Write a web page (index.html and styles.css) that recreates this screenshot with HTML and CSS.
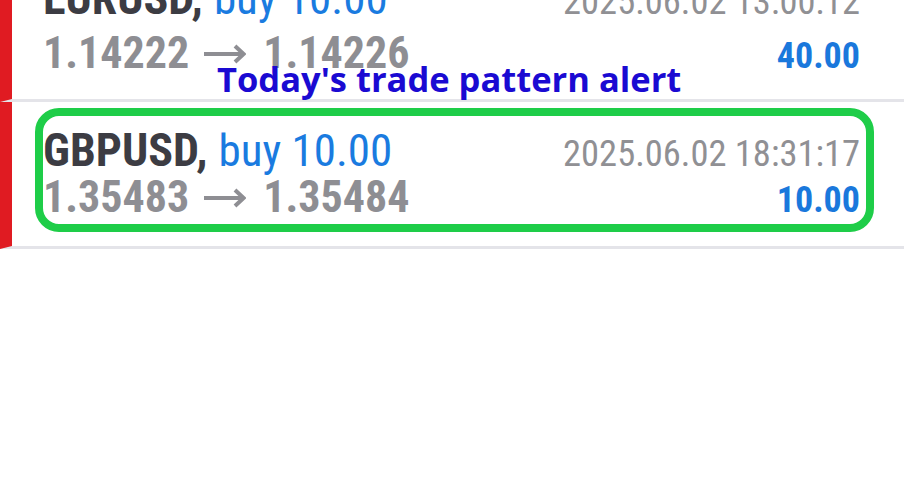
FILE: index.html
```html
<!DOCTYPE html>
<html lang="en">
<head>
    <meta charset="UTF-8">
    <meta name="viewport" content="width=device-width, initial-scale=1.0">
    <title>Trade history</title>
    <link rel="stylesheet" href="styles.css">
</head>
<body>
    <div class="deals">
        <div class="deal deal-top">
            <div class="deal-line">
                <span class="symbol">EURUSD,</span>
                <span class="side">buy 10.00</span>
                <span class="time">2025.06.02 13:00:12</span>
            </div>
            <div class="deal-line">
                <span class="prices">1.14222<svg class="arrow" width="42" height="24" viewBox="0 0 42 24"><path d="M0 12H39M31 4L39.5 12L31 20" fill="none" stroke="currentColor" stroke-width="4"/></svg>1.14226</span>
                <span class="profit">40.00</span>
            </div>
        </div>
        <div class="deal">
            <div class="deal-line">
                <span class="symbol">GBPUSD,</span>
                <span class="side">buy 10.00</span>
                <span class="time">2025.06.02 18:31:17</span>
            </div>
            <div class="deal-line">
                <span class="prices">1.35483<svg class="arrow" width="42" height="24" viewBox="0 0 42 24"><path d="M0 12H39M31 4L39.5 12L31 20" fill="none" stroke="currentColor" stroke-width="4"/></svg>1.35484</span>
                <span class="profit">10.00</span>
            </div>
            <div class="highlight"></div>
            <div class="note">Today's trade pattern alert</div>
        </div>
    </div>
</body>
</html>
```

FILE: styles.css
```css
body {
    margin: 0;
    background: #fff;
    font-family: 'Roboto Condensed', 'Roboto', sans-serif;
    font-stretch: condensed;
}

.deals {
    margin-top: -45px;
}

.deal {
    position: relative;
    height: 144px;
    box-sizing: content-box;
    border-left: 12px solid #e01b22;
    border-bottom: 3px solid #e4e4e9;
    padding: 0 44px 0 31px;
    display: flex;
    flex-direction: column;
    justify-content: center;
}

.deal-line {
    display: flex;
    align-items: baseline;
    height: 48px;
    position: relative;
    top: -3px;
}

/* first row is scrolled half out of view */
.deal-top .deal-line:first-child {
    top: -8px;
}

.deal-top .deal-line:last-child {
    top: 0;
}

.symbol {
    font-size: 46px;
    font-weight: bold;
    color: #3c3c43;
}

.side {
    font-size: 45px;
    color: #1a7be0;
    margin-left: 11px;
}

.time {
    margin-left: auto;
    font-size: 36.5px;
    color: #909094;
}

.prices {
    font-size: 44px;
    font-weight: bold;
    color: #8e8e93;
}

.arrow {
    margin: 0 17px 0 15px;
    vertical-align: 2px;
}

.profit {
    margin-left: auto;
    font-size: 36px;
    font-weight: bold;
    color: #1a78dc;
}

/* annotation overlay */
.highlight {
    position: absolute;
    left: 23px;
    top: 6px;
    width: 823px;
    height: 108px;
    border: 8px solid #1ecd48;
    border-radius: 24px;
}

.note {
    position: absolute;
    left: 205px;
    top: -47px;
    font-family: 'Open Sans', sans-serif;
    font-stretch: normal;
    font-size: 34.5px;
    font-weight: bold;
    color: #1a0ad2;
    white-space: nowrap;
}
```
